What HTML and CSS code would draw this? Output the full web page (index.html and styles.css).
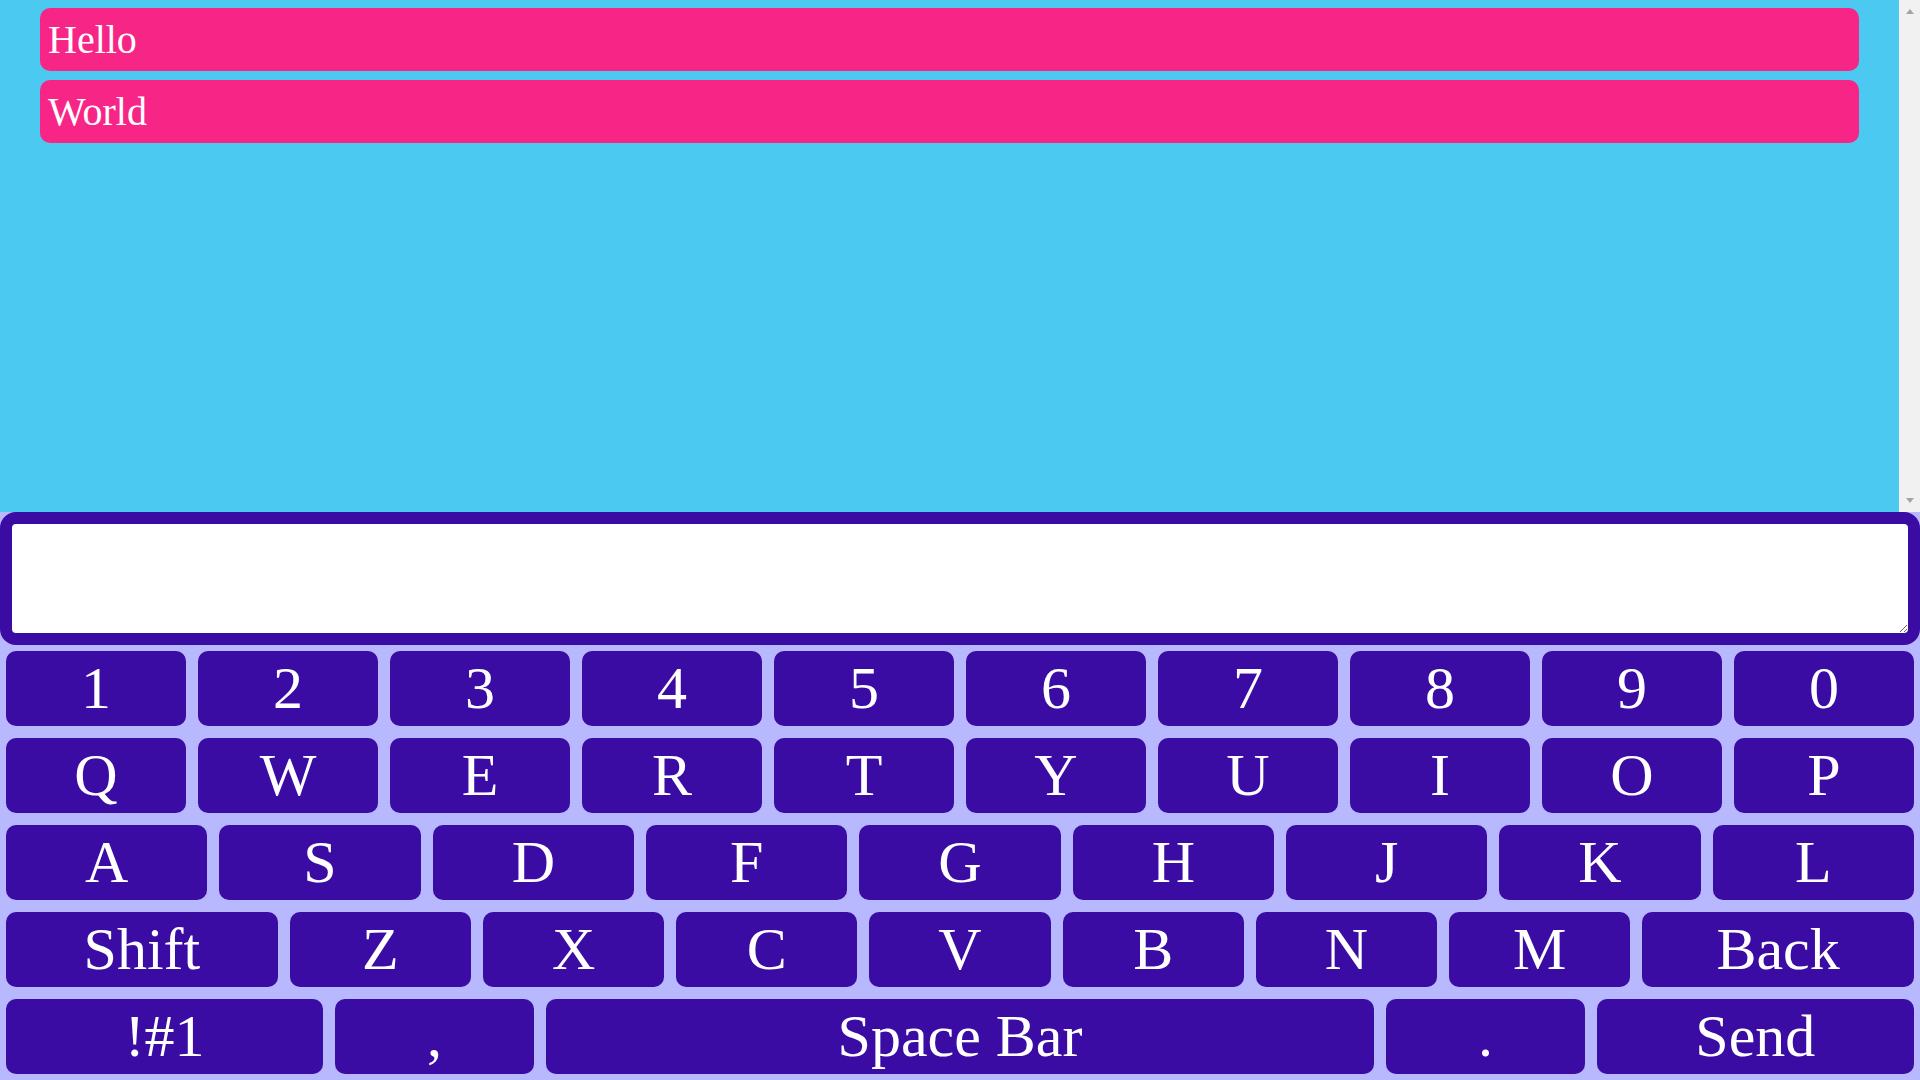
FILE: index.html
```html
<!DOCTYPE html>
<html lang="en">
<head>
    <meta charset="UTF-8">
    <meta name="viewport" content="width=device-width, initial-scale=1.0">
    <title>Chat Keyboard</title>
    <link rel="stylesheet" href="styles.css">
</head>
<body>
    <div class="chat">
        <div class="top">
            <div class="messages" id="messages">
                <div class="message">Hello</div>
                <div class="message">World</div>
            </div>
            <!-- scroll rail, kept visible even when there is nothing to scroll -->
            <div class="rail">
                <span class="arrow-up"></span>
                <span class="arrow-down"></span>
            </div>
        </div>

        <div class="composer">
            <textarea id="input"></textarea>

            <div class="keyboard" id="keyboard">
                <div class="row">
                    <button class="key">1</button>
                    <button class="key">2</button>
                    <button class="key">3</button>
                    <button class="key">4</button>
                    <button class="key">5</button>
                    <button class="key">6</button>
                    <button class="key">7</button>
                    <button class="key">8</button>
                    <button class="key">9</button>
                    <button class="key">0</button>
                </div>
                <div class="row">
                    <button class="key">Q</button>
                    <button class="key">W</button>
                    <button class="key">E</button>
                    <button class="key">R</button>
                    <button class="key">T</button>
                    <button class="key">Y</button>
                    <button class="key">U</button>
                    <button class="key">I</button>
                    <button class="key">O</button>
                    <button class="key">P</button>
                </div>
                <div class="row">
                    <button class="key">A</button>
                    <button class="key">S</button>
                    <button class="key">D</button>
                    <button class="key">F</button>
                    <button class="key">G</button>
                    <button class="key">H</button>
                    <button class="key">J</button>
                    <button class="key">K</button>
                    <button class="key">L</button>
                </div>
                <div class="row">
                    <button class="key wide" data-action="shift">Shift</button>
                    <button class="key">Z</button>
                    <button class="key">X</button>
                    <button class="key">C</button>
                    <button class="key">V</button>
                    <button class="key">B</button>
                    <button class="key">N</button>
                    <button class="key">M</button>
                    <button class="key wide" data-action="back">Back</button>
                </div>
                <div class="row">
                    <button class="key mode" data-action="symbols">!#1</button>
                    <button class="key">,</button>
                    <button class="key space" data-action="space">Space Bar</button>
                    <button class="key">.</button>
                    <button class="key mode" data-action="send">Send</button>
                </div>
            </div>
        </div>
    </div>

    <script>
        const input = document.getElementById('input');
        const messages = document.getElementById('messages');
        let shift = true;

        document.getElementById('keyboard').addEventListener('click', function (event) {
            const key = event.target.closest('.key');
            if (!key) return;

            const action = key.dataset.action;

            if (action === 'shift') {
                shift = !shift;
            } else if (action === 'back') {
                input.value = input.value.slice(0, -1);
            } else if (action === 'space') {
                input.value += ' ';
            } else if (action === 'send') {
                if (input.value.trim() === '') return;
                const msg = document.createElement('div');
                msg.className = 'message';
                msg.textContent = input.value;
                messages.appendChild(msg);
                messages.scrollTop = messages.scrollHeight;
                input.value = '';
            } else if (action === 'symbols') {
                // symbol page not done yet
            } else {
                const ch = key.textContent;
                input.value += shift ? ch : ch.toLowerCase();
            }
        });
    </script>
</body>
</html>
```

FILE: styles.css
```css
body {
    margin: 0;
    font-family: "Liberation Serif", "Times New Roman", serif;
}

.chat {
    display: flex;
    flex-direction: column;
    height: 100vh;
}

.top {
    flex: 1;
    min-height: 0;
    display: flex;
    background: #4cc9f0;
}

.messages {
    flex: 1;
    overflow-y: auto;
    display: flex;
    flex-direction: column;
    gap: 9px;
    padding: 8px 40px;
}

.rail {
    width: 21px;
    background: #f1f1f1;
    display: flex;
    flex-direction: column;
    justify-content: space-between;
    align-items: center;
    padding: 9px 0;
    box-sizing: border-box;
}

.arrow-up {
    border-left: 4.5px solid transparent;
    border-right: 4.5px solid transparent;
    border-bottom: 5px solid #a3a3a3;
}

.arrow-down {
    border-left: 4.5px solid transparent;
    border-right: 4.5px solid transparent;
    border-top: 5px solid #a3a3a3;
}

.message {
    background: #f72585;
    color: white;
    font-size: 40px;
    padding: 8px 8px;
    border-radius: 10px;
}

.composer {
    background: #b8b8ff;
}

textarea {
    display: block;
    width: 100%;
    height: 133px;
    margin: 0;
    box-sizing: border-box;
    border: 12px solid #3a0ca3;
    border-radius: 16px;
    background: white;
    font-family: inherit;
    font-size: 40px;
    outline: none;
}

.row {
    display: flex;
}

.key {
    flex: 1 1 0;
    min-width: 0;
    margin: 6px;
    padding: 3px 0;
    border: none;
    border-radius: 10px;
    background: #3a0ca3;
    color: white;
    font-family: inherit;
    font-size: 60px;
    cursor: pointer;
}

.key:active {
    background: #7209b7;
}

.wide {
    flex-grow: 1.5;
}

.mode {
    flex-grow: 1.6;
}

.space {
    flex-grow: 4.18;
}
```
